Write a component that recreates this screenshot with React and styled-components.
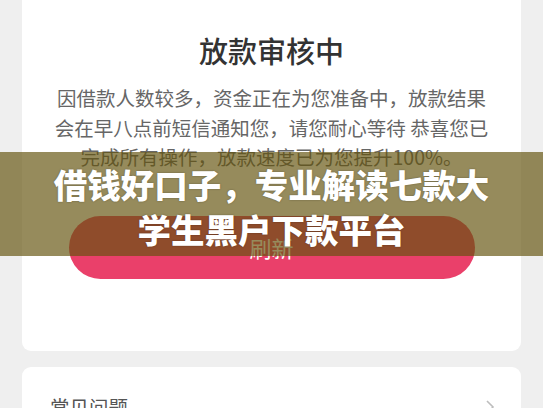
import styled, { createGlobalStyle } from "styled-components";

const GlobalStyle = createGlobalStyle`
  html, body {
    margin: 0;
    padding: 0;
    background: #efefef;
  }
  body {
    font-family: "Noto Sans CJK SC", "Noto Sans", sans-serif;
  }
`;

const App = () => {
  return (
    <>
      <GlobalStyle />
      <Page>
        <Card>
          <Title>放款审核中</Title>
          <Message>
            因借款人数较多，资金正在为您准备中，放款结果
            <br />
            会在早八点前短信通知您，请您耐心等待 恭喜您已
            <br />
            完成所有操作，放款速度已为您提升100%。
          </Message>
          <RefreshButton>刷新</RefreshButton>
        </Card>

        <FaqCard>
          <FaqRow>
            <FaqLabel>常见问题</FaqLabel>
            <svg width="10" height="16" viewBox="0 0 10 16">
              <polyline
                points="2,2 8,8 2,14"
                fill="none"
                stroke="#bdbdbd"
                strokeWidth="1.6"
              />
            </svg>
          </FaqRow>
        </FaqCard>

        {/* banner over the page */}
        <Banner>
          借钱好口子，专业解读七款大
          <br />
          学生黑户下款平台
        </Banner>
      </Page>
    </>
  );
};

export default App;

const Page = styled.div`
  position: relative;
  min-height: 100vh;
  padding: 0 22px;
  background: #efefef;
  overflow: hidden;
`;

const Card = styled.div`
  background: #fff;
  border-radius: 0 0 9px 9px;
  padding: 30px 30px 72px;
  display: flex;
  flex-direction: column;
  align-items: center;
`;

const Title = styled.div`
  font-size: 29px;
  line-height: 40px;
  font-weight: 500;
  color: #333;
`;

const Message = styled.p`
  margin: 13px 0 0;
  font-size: 19.5px;
  line-height: 29.5px;
  color: #666;
  text-align: center;
  white-space: nowrap;
`;

const RefreshButton = styled.div`
  margin-top: 44px;
  width: 406px;
  height: 63px;
  border-radius: 32px;
  background: #ea406a;
  color: #fff;
  font-size: 22px;
  display: flex;
  align-items: center;
  justify-content: center;
`;

const FaqCard = styled.div`
  margin-top: 16px;
  background: #fff;
  border-radius: 9px;
  padding: 26px 26px 26px 28px;
`;

const FaqRow = styled.div`
  display: flex;
  align-items: center;
  justify-content: space-between;
  height: 28px;
`;

const FaqLabel = styled.span`
  font-size: 19.5px;
  color: #555;
`;

const Banner = styled.div`
  position: absolute;
  top: 152px;
  left: 0;
  right: 0;
  height: 104px;
  box-sizing: border-box;
  padding-top: 9px;
  background: rgba(98, 82, 12, 0.67);
  color: #fff;
  font-size: 33.5px;
  line-height: 45px;
  font-weight: 900;
  text-align: center;
  white-space: nowrap;
  text-shadow: 0 0 2px rgba(0, 0, 0, 0.35);
`;
